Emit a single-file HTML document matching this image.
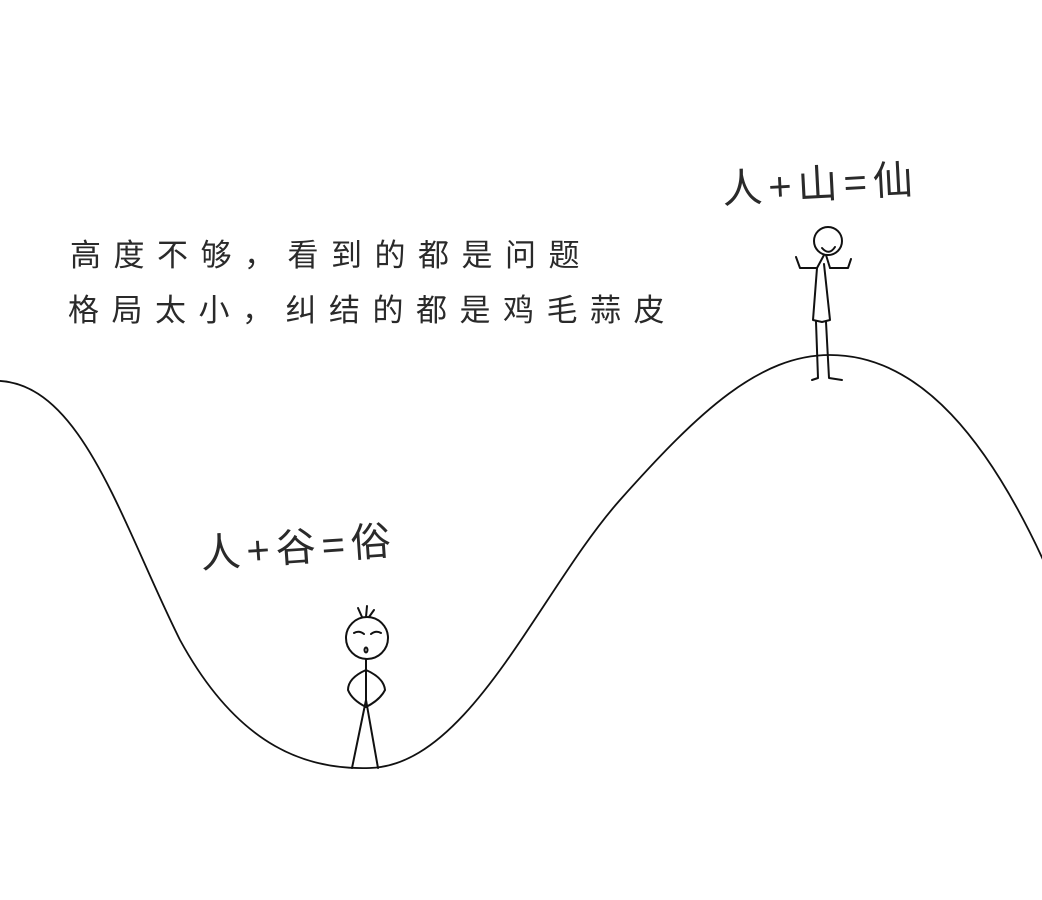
<!DOCTYPE html>
<html><head><meta charset="utf-8"><style>
body{margin:0;width:1042px;height:900px;background:#fff;overflow:hidden;position:relative;font-family:"Liberation Sans","Noto Sans CJK SC",sans-serif;color:#2a2a2a}
.t{position:absolute;white-space:nowrap;font-weight:400}
</style></head><body>
<div class="t" style="left:70px;top:230px;font-size:31px;letter-spacing:12.5px">高度不够，看到的都是问题</div>
<div class="t" style="left:68px;top:285px;font-size:31px;letter-spacing:12.5px">格局太小，纠结的都是鸡毛蒜皮</div>
<div class="t" style="left:722px;top:152px;font-size:40px;letter-spacing:6px;transform:rotate(-3deg)">人+山=仙</div>
<div class="t" style="left:200px;top:515px;font-size:40px;letter-spacing:6px;transform:rotate(-4deg)">人+谷=俗</div>
<svg width="1042" height="900" style="position:absolute;left:0;top:0" fill="none" stroke="#111" stroke-width="2" stroke-linecap="round" stroke-linejoin="round">
<path d="M-10,381 C80,375 120,520 180,640 C240,750 310,770 370,768 C470,765 540,590 620,500 C700,410 760,355 830,355 C920,355 990,440 1050,575" stroke-width="1.8"/>
<circle cx="367" cy="638" r="21"/>
<path d="M362,617 L358,608 M366,617 L367,606 M369,617 L374,610"/>
<path d="M354,633 Q359,630 364,634 M371,634 Q376,630 381,633"/>
<ellipse cx="366" cy="650" rx="1.5" ry="2.5"/>
<path d="M366,659 L366,700 L352,768 M366,700 L378,768"/>
<path d="M366,670 Q348,678 348,690 Q352,700 366,707 M366,670 Q384,678 385,690 Q380,700 366,707"/>
<circle cx="828" cy="241" r="14"/>
<path d="M822,248 Q829,256 835,247"/>
<path d="M824,255 L817,268 L813,320 L822,322 L830,320 L824,264 M826,255 L830,268"/>
<path d="M817,268 L800,268 L796,257 M830,268 L848,268 L851,259"/>
<path d="M816,322 L818,378 L812,380 M826,322 L829,378 L842,380"/>
</svg>
</body></html>
